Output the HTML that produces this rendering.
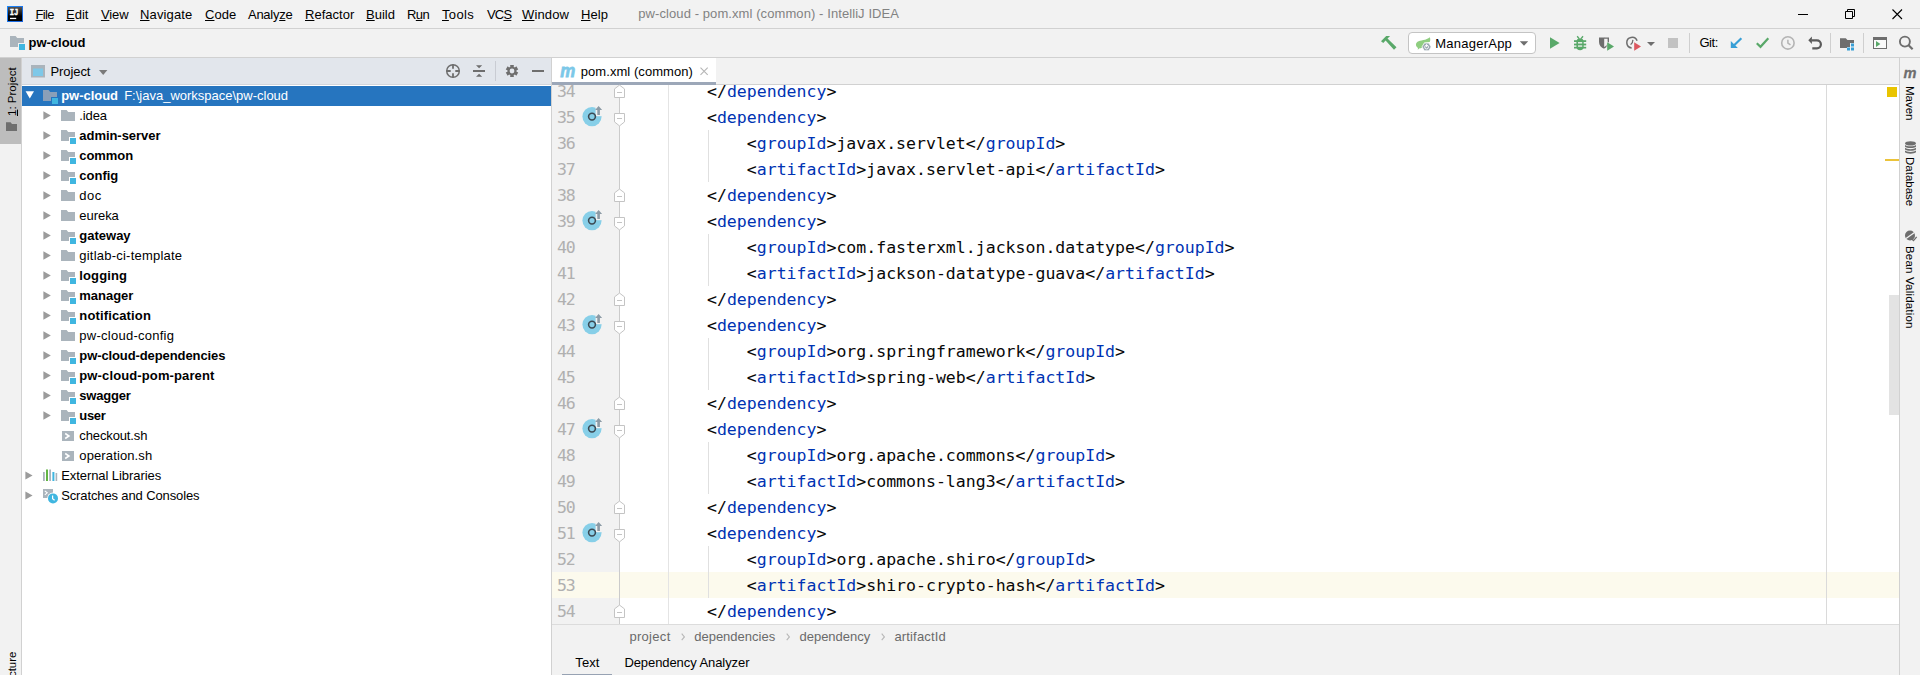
<!DOCTYPE html><html><head><meta charset="utf-8"><title>pw-cloud - pom.xml (common) - IntelliJ IDEA</title><style>

html,body{margin:0;padding:0;}
body{width:1920px;height:675px;overflow:hidden;background:#f2f2f2;position:relative;font-family:"Liberation Sans", sans-serif;font-size:13px;color:#000;}
.a{position:absolute;}
.x{position:absolute;white-space:nowrap;line-height:20px;height:20px;}
.x u{text-decoration:underline;text-decoration-thickness:1px;text-underline-offset:1px;}
svg{position:absolute;overflow:visible;}
.code{position:absolute;white-space:pre;font-family:"DejaVu Sans Mono", "Liberation Mono", monospace;font-size:16.54px;line-height:26px;height:26px;color:#080808;}
.code .t{color:#0033b3;}
.ln{position:absolute;font-family:"DejaVu Sans Mono", "Liberation Mono", monospace;font-size:16.54px;line-height:26px;height:26px;color:#b0b0b0;left:557px;letter-spacing:-1.1px;}

</style></head><body>
<div class="a" style="left:0;top:28px;width:1920px;height:1px;background:#d1d1d1"></div>
<div class="a" style="left:0;top:57px;width:1920px;height:1px;background:#d1d1d1"></div>
<div class="a" style="left:0;top:58px;width:21px;height:86px;background:#bdbdbd"></div>
<div class="a" style="left:21px;top:58px;width:1px;height:617px;background:#d1d1d1"></div>
<div class="a" style="left:22px;top:58px;width:529px;height:26px;background:#e2e6ec"></div>
<div class="a" style="left:22px;top:84px;width:529px;height:1px;background:#d3d6db"></div>
<div class="a" style="left:22px;top:85px;width:529px;height:590px;background:#fff"></div>
<div class="a" style="left:22px;top:86px;width:529px;height:20px;background:#2675bf"></div>
<div class="a" style="left:551px;top:58px;width:1px;height:617px;background:#d1d1d1"></div>
<div class="a" style="left:552px;top:85px;width:1347px;height:539px;background:#fff"></div>
<div class="a" style="left:552px;top:84px;width:1347px;height:1px;background:#d1d1d1"></div>
<div class="a" style="left:552px;top:58px;width:164px;height:24px;background:#fff"></div>
<div class="a" style="left:552px;top:82px;width:164px;height:3px;background:#9ca7b8"></div>
<div class="a" style="left:552px;top:85px;width:67px;height:539px;background:#f2f2f2"></div>
<div class="a" style="left:552px;top:572px;width:1347px;height:26px;background:#fcfaed"></div>
<div class="a" style="left:619px;top:85px;width:1px;height:539px;background:#cbcbcb"></div>
<div class="a" style="left:668px;top:85px;width:1px;height:539px;background:#e4e4e4"></div>
<div class="a" style="left:708px;top:130px;width:1px;height:52px;background:#e0e0e0"></div>
<div class="a" style="left:708px;top:234px;width:1px;height:52px;background:#e0e0e0"></div>
<div class="a" style="left:708px;top:338px;width:1px;height:52px;background:#e0e0e0"></div>
<div class="a" style="left:708px;top:442px;width:1px;height:52px;background:#e0e0e0"></div>
<div class="a" style="left:708px;top:546px;width:1px;height:52px;background:#e0e0e0"></div>
<div class="a" style="left:1826px;top:85px;width:1px;height:539px;background:#dadada"></div>
<div class="a" style="left:1889px;top:295px;width:10px;height:120px;background:#e3e3e3"></div>
<div class="a" style="left:1887px;top:87px;width:10px;height:10px;background:#e9c400"></div>
<div class="a" style="left:1885px;top:159px;width:14px;height:2px;background:#ebc33a"></div>
<div class="a" style="left:1900px;top:58px;width:20px;height:617px;background:#f2f2f2"></div>
<div class="a" style="left:1899px;top:58px;width:1px;height:617px;background:#d1d1d1"></div>
<div class="a" style="left:552px;top:624px;width:1347px;height:51px;background:#f2f2f2"></div>
<div class="a" style="left:552px;top:624px;width:1347px;height:1px;background:#dcdcdc"></div>
<div class="a" style="left:562px;top:674px;width:50px;height:1px;background:#97a2b3"></div>
<svg width="1920" height="675" viewBox="0 0 1920 675" style="left:0;top:0">
<defs><linearGradient id="ijg" x1="0" y1="0" x2="1" y2="1"><stop offset="0" stop-color="#1d8bff"/><stop offset="1" stop-color="#1a5fd8"/></linearGradient><linearGradient id="ijb" x1="0" y1="0" x2="0" y2="1"><stop offset="0" stop-color="#555"/><stop offset=".65" stop-color="#000"/></linearGradient></defs>
<rect x="7" y="6" width="16" height="16" fill="url(#ijg)"/><rect x="8" y="7" width="14" height="14" fill="url(#ijb)"/>
<text x="9.700" y="15.100" font-family="'Liberation Mono',monospace" font-weight="bold" font-size="9.600" fill="#fff" stroke="#fff" stroke-width="0.45" textLength="8.600" lengthAdjust="spacingAndGlyphs">IJ</text>
<rect x="10" y="17.800" width="6.200" height="1.300" fill="#fff"/>
<rect x="1798" y="14" width="10" height="1" fill="#000"/>
<path d="M1845.5 11.5h7v7h-7z M1847.5 11.5v-2h7v7h-2" fill="none" stroke="#000" stroke-width="1"/>
<path d="M1892.5 9.5l9.5 9.5M1902 9.5l-9.5 9.5" fill="none" stroke="#000" stroke-width="1.1"/>
<path d="M10 36h5.6l1.6 2h6.8v9h-14z" fill="#aab4bc"/><rect x="18" y="43" width="7" height="7" fill="#f2f2f2"/><rect x="19" y="44" width="6" height="6" fill="#40b6e0"/>
<path d="M1381 41.2l5.2-5.2h3.9l-2.6 2.6 9 8.6-2.5 2.5-8.4-9.200-2.300 2.600z" fill="#59a869"/>
<rect x="1408.5" y="32.5" width="127" height="21" rx="3.5" fill="#fff" stroke="#c4c4c4"/>
<path d="M1429.800 37.200c.7 1.800.6 3.300-.1 4.700l-5.600.8c.4 2.600-1 5.300-4.500 5.600l-1.900 1.500.300-1.800c-2.500-1.500-2.700-4.500-.5-6.200 2.600-1.900 8.900-1.300 12.300-4.600z" fill="#8fce80"/>
<path d="M1422 46.900l2.300-3.900h4.600l2.300 3.900-2.300 3.900h-4.600z" fill="#9aa7b0" stroke="#fff" stroke-width=".8"/>
<circle cx="1426.600" cy="47.100" r="1.900" fill="none" stroke="#fff" stroke-width=".9"/><rect x="1426.100" y="44.200" width="1" height="2.800" fill="#fff"/>
<path d="M1519.800 41.200h8.400l-4.200 4.500z" fill="#6e6e6e"/>
<path d="M1550 37.200v11.600l9.600-5.800z" fill="#59a869"/>
<g fill="#59a869"><path d="M1576.400 42a3.650 3.800 0 0 1 7.300 0v4.500a3.650 3.800 0 0 1-7.300 0z"/><rect x="1574" y="40.200" width="12.200" height="1.800"/><rect x="1574" y="43.600" width="12.200" height="1.800"/><rect x="1574" y="46.800" width="12.200" height="1.700"/></g>
<path d="M1577.200 36.300l1.900 2.300M1583 36.300l-1.900 2.300" stroke="#59a869" stroke-width="1.400" fill="none"/>
<rect x="1578" y="42.100" width="4.200" height="1.400" fill="#f2f2f2"/><rect x="1578" y="45.400" width="4.200" height="1.300" fill="#f2f2f2"/>
<path d="M1599 37.400h5.200v11.400c-3-1.200-5.200-3.700-5.200-6.900z" fill="#6e6e6e"/>
<path d="M1604 38.100h4.300v3.800c0 2.700-1.800 4.800-4.300 6" fill="none" stroke="#6e6e6e" stroke-width="1.400"/>
<path d="M1607.200 42.300v8.500l6.800-4.250z" fill="#59a869" stroke="#f2f2f2" stroke-width="1.200" paint-order="stroke"/>
<path d="M1637.080 40.790A5.300 5.300 0 1 0 1631.640 47.880" fill="none" stroke="#6e6e6e" stroke-width="1.500"/>
<path d="M1632.900 39.800l-.6 3-1.700 1.800" fill="none" stroke="#6e6e6e" stroke-width="1.300"/>
<path d="M1634.200 42.300v8.500l6.800-4.250z" fill="#db5860" stroke="#f2f2f2" stroke-width="1.200" paint-order="stroke"/>
<path d="M1647 42h8l-4 3.900z" fill="#6e6e6e"/>
<rect x="1668" y="38" width="10" height="10" fill="#c2c2c2"/>
<rect x="1689" y="33" width="1" height="20" fill="#cfcfcf"/>
<rect x="1830" y="33" width="1" height="20" fill="#cfcfcf"/>
<rect x="1863" y="33" width="1" height="20" fill="#cfcfcf"/>
<path d="M1730.800 41v7.100h7.100l-2.500-2.500 6.700-6.700-1.500-1.500-6.700 6.700z" fill="#389fd6"/>
<path d="M1756.800 43.200l3.700 3.600 7.800-8.600" fill="none" stroke="#59a869" stroke-width="2.200"/>
<circle cx="1787.900" cy="42.900" r="6.200" fill="none" stroke="#b4b4b4" stroke-width="1.600"/><path d="M1787.900 39.800v3.300l2.600 1.800" fill="none" stroke="#b4b4b4" stroke-width="1.500"/>
<path d="M1808.300 40.300l3.600-3.700v7.400z" fill="#5a5a5a"/><path d="M1811.500 40.300h5.400a4 4 0 0 1 0 8h-4.600" fill="none" stroke="#5a5a5a" stroke-width="2.200"/>
<path d="M1840 38.200h5.800l1.600 1.800h6.600v3h-4v4h-3v1h-7z" fill="#6e6e6e"/>
<rect x="1851" y="43.5" width="3" height="3" fill="#389fd6"/>
<rect x="1847" y="47.5" width="3" height="3" fill="#389fd6"/>
<rect x="1851" y="47.5" width="3" height="3" fill="#389fd6"/>
<rect x="1873.500" y="37.500" width="13" height="11" fill="#fafafa" stroke="#6e6e6e"/><rect x="1873" y="37" width="14" height="3" fill="#6e6e6e"/>
<path d="M1876 41v6l4.400-3z" fill="#59a869"/>
<circle cx="1904.900" cy="41.600" r="5" fill="none" stroke="#6e6e6e" stroke-width="1.900"/><path d="M1908.600 45.300l4 4" stroke="#6e6e6e" stroke-width="2.200" fill="none"/>
<path d="M6 122.300h4.600l1.400 1.700h5v7h-11z" fill="#6e6e6e"/>
<rect x="31" y="65" width="14" height="12.500" fill="#aab4bc"/><rect x="33" y="68.500" width="10" height="7.500" fill="#7ec8e8"/>
<path d="M99 70h8.400l-4.200 5z" fill="#7a7a7a"/>
<g fill="none" stroke="#6e6e6e"><circle cx="453" cy="71" r="6.300" stroke-width="1.500"/><path d="M453 64.500v4.200M453 73.300v4.200M446.500 71h4.200M455.300 71h4.200" stroke-width="1.800"/></g>
<rect x="473" y="70" width="12" height="2" fill="#6e6e6e"/><path d="M476 65.200h6.200l-3.100 3z M476 76.800h6.200l-3.100-3z" fill="#6e6e6e"/>
<rect x="495" y="61" width="1" height="20" fill="#c9ccd3"/>
<path d="M510.13 64.88L513.87 64.88L513.65 66.71L514.89 67.43L516.36 66.32L518.24 69.56L516.54 70.28L516.54 71.72L518.24 72.44L516.36 75.68L514.89 74.57L513.65 75.29L513.87 77.12L510.13 77.12L510.35 75.29L509.11 74.57L507.64 75.68L505.76 72.44L507.46 71.72L507.46 70.28L505.76 69.56L507.64 66.32L509.11 67.43L510.35 66.71z M514.400 71a2.400 2.400 0 1 0-4.800 0a2.400 2.400 0 1 0 4.800 0z" fill="#6e6e6e" fill-rule="evenodd"/>
<rect x="532" y="70" width="12" height="2" fill="#6e6e6e"/>
<path d="M25.600 91.200h8.400l-4.200 7.400z" fill="#fff"/>
<path d="M43 90h5.6l1.6 2h6.8v9h-14z" fill="#8a9fb8"/><rect x="51" y="97" width="7" height="7" fill="#2675bf"/><rect x="52" y="98" width="6" height="6" fill="#40b6e0"/>
<path d="M43.400 111.3v8.400l7.400-4.200z" fill="#9b9b9b"/>
<path d="M61 110h5.6l1.6 2h6.8v9h-14z" fill="#aab4bc"/>
<path d="M43.400 131.3v8.400l7.400-4.200z" fill="#9b9b9b"/>
<path d="M61 130h5.6l1.6 2h6.8v9h-14z" fill="#aab4bc"/><rect x="69" y="137" width="7" height="7" fill="#fff"/><rect x="70" y="138" width="6" height="6" fill="#40b6e0"/>
<path d="M43.400 151.3v8.400l7.400-4.200z" fill="#9b9b9b"/>
<path d="M61 150h5.6l1.6 2h6.8v9h-14z" fill="#aab4bc"/><rect x="69" y="157" width="7" height="7" fill="#fff"/><rect x="70" y="158" width="6" height="6" fill="#40b6e0"/>
<path d="M43.400 171.3v8.400l7.400-4.200z" fill="#9b9b9b"/>
<path d="M61 170h5.6l1.6 2h6.8v9h-14z" fill="#aab4bc"/><rect x="69" y="177" width="7" height="7" fill="#fff"/><rect x="70" y="178" width="6" height="6" fill="#40b6e0"/>
<path d="M43.400 191.3v8.400l7.400-4.200z" fill="#9b9b9b"/>
<path d="M61 190h5.6l1.6 2h6.8v9h-14z" fill="#aab4bc"/>
<path d="M43.400 211.3v8.400l7.400-4.200z" fill="#9b9b9b"/>
<path d="M61 210h5.6l1.6 2h6.8v9h-14z" fill="#aab4bc"/>
<path d="M43.400 231.3v8.400l7.400-4.200z" fill="#9b9b9b"/>
<path d="M61 230h5.6l1.6 2h6.8v9h-14z" fill="#aab4bc"/><rect x="69" y="237" width="7" height="7" fill="#fff"/><rect x="70" y="238" width="6" height="6" fill="#40b6e0"/>
<path d="M43.400 251.3v8.400l7.400-4.200z" fill="#9b9b9b"/>
<path d="M61 250h5.6l1.6 2h6.8v9h-14z" fill="#aab4bc"/>
<path d="M43.400 271.3v8.400l7.400-4.200z" fill="#9b9b9b"/>
<path d="M61 270h5.6l1.6 2h6.8v9h-14z" fill="#aab4bc"/><rect x="69" y="277" width="7" height="7" fill="#fff"/><rect x="70" y="278" width="6" height="6" fill="#40b6e0"/>
<path d="M43.400 291.3v8.400l7.400-4.200z" fill="#9b9b9b"/>
<path d="M61 290h5.6l1.6 2h6.8v9h-14z" fill="#aab4bc"/><rect x="69" y="297" width="7" height="7" fill="#fff"/><rect x="70" y="298" width="6" height="6" fill="#40b6e0"/>
<path d="M43.400 311.3v8.400l7.400-4.200z" fill="#9b9b9b"/>
<path d="M61 310h5.6l1.6 2h6.8v9h-14z" fill="#aab4bc"/><rect x="69" y="317" width="7" height="7" fill="#fff"/><rect x="70" y="318" width="6" height="6" fill="#40b6e0"/>
<path d="M43.400 331.3v8.400l7.400-4.200z" fill="#9b9b9b"/>
<path d="M61 330h5.6l1.6 2h6.8v9h-14z" fill="#aab4bc"/>
<path d="M43.400 351.3v8.400l7.400-4.200z" fill="#9b9b9b"/>
<path d="M61 350h5.6l1.6 2h6.8v9h-14z" fill="#aab4bc"/><rect x="69" y="357" width="7" height="7" fill="#fff"/><rect x="70" y="358" width="6" height="6" fill="#40b6e0"/>
<path d="M43.400 371.3v8.400l7.400-4.200z" fill="#9b9b9b"/>
<path d="M61 370h5.6l1.6 2h6.8v9h-14z" fill="#aab4bc"/><rect x="69" y="377" width="7" height="7" fill="#fff"/><rect x="70" y="378" width="6" height="6" fill="#40b6e0"/>
<path d="M43.400 391.3v8.400l7.400-4.200z" fill="#9b9b9b"/>
<path d="M61 390h5.6l1.6 2h6.8v9h-14z" fill="#aab4bc"/><rect x="69" y="397" width="7" height="7" fill="#fff"/><rect x="70" y="398" width="6" height="6" fill="#40b6e0"/>
<path d="M43.400 411.3v8.400l7.400-4.200z" fill="#9b9b9b"/>
<path d="M61 410h5.6l1.6 2h6.8v9h-14z" fill="#aab4bc"/><rect x="69" y="417" width="7" height="7" fill="#fff"/><rect x="70" y="418" width="6" height="6" fill="#40b6e0"/>
<rect x="62" y="431" width="12" height="10" fill="#aab4bc"/>
<path d="M65.200 433.5l3.800 2.500-3.800 2.500" fill="none" stroke="#fff" stroke-width="1.500"/>
<rect x="62" y="451" width="12" height="10" fill="#aab4bc"/>
<path d="M65.200 453.5l3.800 2.500-3.800 2.500" fill="none" stroke="#fff" stroke-width="1.500"/>
<path d="M25.400 471.5v8l7.200-4z" fill="#9b9b9b"/>
<rect x="43" y="472" width="1.800" height="9" fill="#aab4bc"/>
<rect x="46" y="469.5" width="2" height="11.500" fill="#62b543"/>
<rect x="49.200" y="469.5" width="1.800" height="11.500" fill="#aab4bc"/>
<rect x="52.400" y="472" width="2" height="9" fill="#40b6e0"/>
<rect x="55.600" y="473" width="1.600" height="8" fill="#aab4bc"/>
<path d="M25.400 491.5v8l7.200-4z" fill="#9b9b9b"/>
<rect x="43" y="489" width="10" height="9" fill="#aab4bc"/>
<path d="M44.800 490.8l2.400 2-2.400 2" fill="none" stroke="#fff" stroke-width="1.100"/>
<circle cx="53" cy="498.4" r="5.800" fill="#fff"/><circle cx="53" cy="498.4" r="5" fill="#40b6e0"/>
<path d="M52.600 495.4v3.200l2 1.600" fill="none" stroke="#fff" stroke-width="1.200"/>
<text x="560.2" y="76.800" font-family="'Liberation Sans',sans-serif" font-weight="bold" font-style="italic" font-size="19" fill="#7cc8e8" stroke="#7cc8e8" stroke-width="0.8" textLength="15" lengthAdjust="spacingAndGlyphs">m</text>
<path d="M700.500 67.700l7.200 7.200M707.700 67.700l-7.200 7.200" stroke="#b5b5b5" stroke-width="1.100" fill="none"/>
<path d="M614.500 97.5v-8.600l5-3.800 5 3.800v8.600z" fill="#fff" stroke="#c4c4c4"/>
<rect x="617" y="92" width="5" height="1" fill="#c4c4c4"/>
<path d="M614.500 113.5v8.400l5 4 5-4v-8.400z" fill="#fff" stroke="#c4c4c4"/>
<rect x="617" y="118" width="5" height="1" fill="#c4c4c4"/>
<circle cx="592" cy="116.6" r="9.600" fill="#87cfe8"/>
<path d="M595.600 116.2h7.600v-11h-7.600z" fill="#f2f2f2"/>
<circle cx="592" cy="116.6" r="3.400" fill="none" stroke="#3b4a54" stroke-width="1.600"/>
<path d="M598.600 106l3.500 4h-2.200v5h-2.600v-5h-2.200z" fill="#8c9ba6"/>
<path d="M614.500 201.5v-8.600l5-3.800 5 3.800v8.600z" fill="#fff" stroke="#c4c4c4"/>
<rect x="617" y="196" width="5" height="1" fill="#c4c4c4"/>
<path d="M614.500 217.5v8.400l5 4 5-4v-8.400z" fill="#fff" stroke="#c4c4c4"/>
<rect x="617" y="222" width="5" height="1" fill="#c4c4c4"/>
<circle cx="592" cy="220.6" r="9.600" fill="#87cfe8"/>
<path d="M595.600 220.2h7.600v-11h-7.600z" fill="#f2f2f2"/>
<circle cx="592" cy="220.6" r="3.400" fill="none" stroke="#3b4a54" stroke-width="1.600"/>
<path d="M598.600 210l3.500 4h-2.200v5h-2.600v-5h-2.200z" fill="#8c9ba6"/>
<path d="M614.500 305.5v-8.600l5-3.800 5 3.800v8.600z" fill="#fff" stroke="#c4c4c4"/>
<rect x="617" y="300" width="5" height="1" fill="#c4c4c4"/>
<path d="M614.500 321.5v8.400l5 4 5-4v-8.400z" fill="#fff" stroke="#c4c4c4"/>
<rect x="617" y="326" width="5" height="1" fill="#c4c4c4"/>
<circle cx="592" cy="324.6" r="9.600" fill="#87cfe8"/>
<path d="M595.600 324.2h7.600v-11h-7.600z" fill="#f2f2f2"/>
<circle cx="592" cy="324.6" r="3.400" fill="none" stroke="#3b4a54" stroke-width="1.600"/>
<path d="M598.600 314l3.500 4h-2.200v5h-2.600v-5h-2.200z" fill="#8c9ba6"/>
<path d="M614.500 409.5v-8.600l5-3.800 5 3.800v8.600z" fill="#fff" stroke="#c4c4c4"/>
<rect x="617" y="404" width="5" height="1" fill="#c4c4c4"/>
<path d="M614.500 425.5v8.400l5 4 5-4v-8.400z" fill="#fff" stroke="#c4c4c4"/>
<rect x="617" y="430" width="5" height="1" fill="#c4c4c4"/>
<circle cx="592" cy="428.6" r="9.600" fill="#87cfe8"/>
<path d="M595.600 428.2h7.600v-11h-7.600z" fill="#f2f2f2"/>
<circle cx="592" cy="428.6" r="3.400" fill="none" stroke="#3b4a54" stroke-width="1.600"/>
<path d="M598.600 418l3.500 4h-2.200v5h-2.600v-5h-2.200z" fill="#8c9ba6"/>
<path d="M614.500 513.5v-8.600l5-3.800 5 3.800v8.600z" fill="#fff" stroke="#c4c4c4"/>
<rect x="617" y="508" width="5" height="1" fill="#c4c4c4"/>
<path d="M614.500 529.5v8.400l5 4 5-4v-8.400z" fill="#fff" stroke="#c4c4c4"/>
<rect x="617" y="534" width="5" height="1" fill="#c4c4c4"/>
<circle cx="592" cy="532.6" r="9.600" fill="#87cfe8"/>
<path d="M595.600 532.2h7.600v-11h-7.600z" fill="#f2f2f2"/>
<circle cx="592" cy="532.6" r="3.400" fill="none" stroke="#3b4a54" stroke-width="1.600"/>
<path d="M598.600 522l3.500 4h-2.200v5h-2.600v-5h-2.200z" fill="#8c9ba6"/>
<path d="M614.500 617.5v-8.600l5-3.800 5 3.800v8.600z" fill="#fff" stroke="#c4c4c4"/>
<rect x="617" y="612" width="5" height="1" fill="#c4c4c4"/>
<path d="M681.7 633.600l2.700 3.300-2.700 3.300" fill="none" stroke="#b6b6b6" stroke-width="1.100"/>
<path d="M786.7 633.600l2.700 3.300-2.700 3.300" fill="none" stroke="#b6b6b6" stroke-width="1.100"/>
<path d="M881.7 633.600l2.700 3.300-2.700 3.300" fill="none" stroke="#b6b6b6" stroke-width="1.100"/>
<text x="1903.600" y="78.300" font-family="'Liberation Sans',sans-serif" font-weight="bold" font-style="italic" font-size="15.500" fill="#6e6e6e" stroke="#6e6e6e" stroke-width="0.3" textLength="13" lengthAdjust="spacingAndGlyphs">m</text>
<g fill="#6e6e6e"><ellipse cx="1910.500" cy="143.400" rx="5.500" ry="2.200"/>
<path d="M1905 145c1.500 1.800 9.500 1.800 11 0v1.700c-1.500 1.800-9.500 1.800-11 0z"/>
<path d="M1905 147.8c1.500 1.800 9.500 1.800 11 0v1.700c-1.500 1.800-9.500 1.800-11 0z"/>
<path d="M1905 150.6c1.500 1.800 9.500 1.800 11 0v1.700c-1.500 1.800-9.500 1.800-11 0z"/>
</g>
<circle cx="1910" cy="235.500" r="5" fill="#6e6e6e"/><path d="M1906 238.500l8.500-6" stroke="#f2f2f2" stroke-width="1.300"/><path d="M1911.500 238.800l2 1.800 3.200-3.800" fill="none" stroke="#6e6e6e" stroke-width="1.300"/>
</svg>
<span class="x r" style="font-size:11.5px;left:2.2px;top:116px;transform:rotate(-90deg);transform-origin:0 0;"><u style="text-underline-offset:1px">1</u>: Project</span>
<span class="x r" style="font-size:11.5px;left:2.4px;top:710.5px;transform:rotate(-90deg);transform-origin:0 0;">7: Structure</span>
<span class="x r" style="font-size:11.5px;left:1919.5px;top:86px;transform:rotate(90deg);transform-origin:0 0;">Maven</span>
<span class="x r" style="font-size:11.5px;left:1919.5px;top:157px;transform:rotate(90deg);transform-origin:0 0;">Database</span>
<span class="x r" style="font-size:11.5px;left:1919.5px;top:246px;letter-spacing:0.2px;transform:rotate(90deg);transform-origin:0 0;">Bean Validation</span>
<div class="ln" style="top:79px">34</div>
<div class="code" style="left:706.98px;top:79px"><span class="p">&lt;/</span><span class="t">dependency</span><span class="p">&gt;</span></div>
<div class="ln" style="top:105px">35</div>
<div class="code" style="left:706.98px;top:105px"><span class="p">&lt;</span><span class="t">dependency</span><span class="p">&gt;</span></div>
<div class="ln" style="top:131px">36</div>
<div class="code" style="left:746.82px;top:131px"><span class="p">&lt;</span><span class="t">groupId</span><span class="p">&gt;</span><span class="p">javax.servlet</span><span class="p">&lt;/</span><span class="t">groupId</span><span class="p">&gt;</span></div>
<div class="ln" style="top:157px">37</div>
<div class="code" style="left:746.82px;top:157px"><span class="p">&lt;</span><span class="t">artifactId</span><span class="p">&gt;</span><span class="p">javax.servlet-api</span><span class="p">&lt;/</span><span class="t">artifactId</span><span class="p">&gt;</span></div>
<div class="ln" style="top:183px">38</div>
<div class="code" style="left:706.98px;top:183px"><span class="p">&lt;/</span><span class="t">dependency</span><span class="p">&gt;</span></div>
<div class="ln" style="top:209px">39</div>
<div class="code" style="left:706.98px;top:209px"><span class="p">&lt;</span><span class="t">dependency</span><span class="p">&gt;</span></div>
<div class="ln" style="top:235px">40</div>
<div class="code" style="left:746.82px;top:235px"><span class="p">&lt;</span><span class="t">groupId</span><span class="p">&gt;</span><span class="p">com.fasterxml.jackson.datatype</span><span class="p">&lt;/</span><span class="t">groupId</span><span class="p">&gt;</span></div>
<div class="ln" style="top:261px">41</div>
<div class="code" style="left:746.82px;top:261px"><span class="p">&lt;</span><span class="t">artifactId</span><span class="p">&gt;</span><span class="p">jackson-datatype-guava</span><span class="p">&lt;/</span><span class="t">artifactId</span><span class="p">&gt;</span></div>
<div class="ln" style="top:287px">42</div>
<div class="code" style="left:706.98px;top:287px"><span class="p">&lt;/</span><span class="t">dependency</span><span class="p">&gt;</span></div>
<div class="ln" style="top:313px">43</div>
<div class="code" style="left:706.98px;top:313px"><span class="p">&lt;</span><span class="t">dependency</span><span class="p">&gt;</span></div>
<div class="ln" style="top:339px">44</div>
<div class="code" style="left:746.82px;top:339px"><span class="p">&lt;</span><span class="t">groupId</span><span class="p">&gt;</span><span class="p">org.springframework</span><span class="p">&lt;/</span><span class="t">groupId</span><span class="p">&gt;</span></div>
<div class="ln" style="top:365px">45</div>
<div class="code" style="left:746.82px;top:365px"><span class="p">&lt;</span><span class="t">artifactId</span><span class="p">&gt;</span><span class="p">spring-web</span><span class="p">&lt;/</span><span class="t">artifactId</span><span class="p">&gt;</span></div>
<div class="ln" style="top:391px">46</div>
<div class="code" style="left:706.98px;top:391px"><span class="p">&lt;/</span><span class="t">dependency</span><span class="p">&gt;</span></div>
<div class="ln" style="top:417px">47</div>
<div class="code" style="left:706.98px;top:417px"><span class="p">&lt;</span><span class="t">dependency</span><span class="p">&gt;</span></div>
<div class="ln" style="top:443px">48</div>
<div class="code" style="left:746.82px;top:443px"><span class="p">&lt;</span><span class="t">groupId</span><span class="p">&gt;</span><span class="p">org.apache.commons</span><span class="p">&lt;/</span><span class="t">groupId</span><span class="p">&gt;</span></div>
<div class="ln" style="top:469px">49</div>
<div class="code" style="left:746.82px;top:469px"><span class="p">&lt;</span><span class="t">artifactId</span><span class="p">&gt;</span><span class="p">commons-lang3</span><span class="p">&lt;/</span><span class="t">artifactId</span><span class="p">&gt;</span></div>
<div class="ln" style="top:495px">50</div>
<div class="code" style="left:706.98px;top:495px"><span class="p">&lt;/</span><span class="t">dependency</span><span class="p">&gt;</span></div>
<div class="ln" style="top:521px">51</div>
<div class="code" style="left:706.98px;top:521px"><span class="p">&lt;</span><span class="t">dependency</span><span class="p">&gt;</span></div>
<div class="ln" style="top:547px">52</div>
<div class="code" style="left:746.82px;top:547px"><span class="p">&lt;</span><span class="t">groupId</span><span class="p">&gt;</span><span class="p">org.apache.shiro</span><span class="p">&lt;/</span><span class="t">groupId</span><span class="p">&gt;</span></div>
<div class="ln" style="top:573px">53</div>
<div class="code" style="left:746.82px;top:573px"><span class="p">&lt;</span><span class="t">artifactId</span><span class="p">&gt;</span><span class="p">shiro-crypto-hash</span><span class="p">&lt;/</span><span class="t">artifactId</span><span class="p">&gt;</span></div>
<div class="ln" style="top:599px">54</div>
<div class="code" style="left:706.98px;top:599px"><span class="p">&lt;/</span><span class="t">dependency</span><span class="p">&gt;</span></div>
<span class="x" style="left:35.5px;top:4.5px;letter-spacing:-0.642px;"><u>F</u>ile</span>
<span class="x" style="left:66.0px;top:4.5px;letter-spacing:-0.002px;"><u>E</u>dit</span>
<span class="x" style="left:101.0px;top:4.5px;letter-spacing:-0.138px;"><u>V</u>iew</span>
<span class="x" style="left:140.0px;top:4.5px;letter-spacing:0.136px;"><u>N</u>avigate</span>
<span class="x" style="left:205.0px;top:4.5px;letter-spacing:0.077px;"><u>C</u>ode</span>
<span class="x" style="left:248.0px;top:4.5px;letter-spacing:-0.267px;">Analy<u>z</u>e</span>
<span class="x" style="left:305.0px;top:4.5px;letter-spacing:0.032px;"><u>R</u>efactor</span>
<span class="x" style="left:366.0px;top:4.5px;letter-spacing:-0.004px;"><u>B</u>uild</span>
<span class="x" style="left:407.0px;top:4.5px;letter-spacing:-0.586px;">R<u>u</u>n</span>
<span class="x" style="left:442.0px;top:4.5px;letter-spacing:0.348px;"><u>T</u>ools</span>
<span class="x" style="left:487.0px;top:4.5px;letter-spacing:-0.800px;">VC<u>S</u></span>
<span class="x" style="left:522.0px;top:4.5px;letter-spacing:0.142px;"><u>W</u>indow</span>
<span class="x" style="left:581.0px;top:4.5px;letter-spacing:0.037px;"><u>H</u>elp</span>
<span class="x" style="left:638.3px;top:4.0px;color:#828282;letter-spacing:0.084px;">pw-cloud - pom.xml (common) - IntelliJ IDEA</span>
<span class="x" style="left:28.5px;top:32.5px;font-weight:bold;letter-spacing:-0.018px;">pw-cloud</span>
<span class="x" style="left:1435.3px;top:33.9px;letter-spacing:0.235px;">ManagerApp</span>
<span class="x" style="left:1699.4px;top:33.0px;letter-spacing:-0.434px;">Git:</span>
<span class="x" style="left:50.5px;top:61.5px;letter-spacing:-0.081px;">Project</span>
<span class="x" style="left:61.2px;top:86.0px;font-weight:bold;color:#fff;letter-spacing:-0.031px;">pw-cloud</span>
<span class="x" style="left:79.3px;top:106.0px;letter-spacing:-0.121px;">.idea</span>
<span class="x" style="left:79.3px;top:126.0px;font-weight:bold;letter-spacing:-0.046px;">admin-server</span>
<span class="x" style="left:79.3px;top:146.0px;font-weight:bold;letter-spacing:-0.062px;">common</span>
<span class="x" style="left:79.3px;top:166.0px;font-weight:bold;letter-spacing:0.000px;">config</span>
<span class="x" style="left:79.3px;top:186.0px;letter-spacing:0.477px;">doc</span>
<span class="x" style="left:79.3px;top:206.0px;letter-spacing:-0.042px;">eureka</span>
<span class="x" style="left:79.3px;top:226.0px;font-weight:bold;letter-spacing:-0.002px;">gateway</span>
<span class="x" style="left:79.3px;top:246.0px;letter-spacing:0.222px;">gitlab-ci-template</span>
<span class="x" style="left:79.3px;top:266.0px;font-weight:bold;letter-spacing:0.123px;">logging</span>
<span class="x" style="left:79.3px;top:286.0px;font-weight:bold;letter-spacing:-0.015px;">manager</span>
<span class="x" style="left:79.3px;top:306.0px;font-weight:bold;letter-spacing:0.138px;">notification</span>
<span class="x" style="left:79.3px;top:326.0px;letter-spacing:0.257px;">pw-cloud-config</span>
<span class="x" style="left:79.3px;top:346.0px;font-weight:bold;letter-spacing:-0.099px;">pw-cloud-dependencies</span>
<span class="x" style="left:79.3px;top:366.0px;font-weight:bold;letter-spacing:0.122px;">pw-cloud-pom-parent</span>
<span class="x" style="left:79.3px;top:386.0px;font-weight:bold;letter-spacing:-0.207px;">swagger</span>
<span class="x" style="left:79.3px;top:406.0px;font-weight:bold;letter-spacing:-0.342px;">user</span>
<span class="x" style="left:79.3px;top:426.0px;letter-spacing:-0.125px;">checkout.sh</span>
<span class="x" style="left:79.3px;top:446.0px;letter-spacing:0.120px;">operation.sh</span>
<span class="x" style="left:61.2px;top:466.0px;letter-spacing:-0.070px;">External Libraries</span>
<span class="x" style="left:61.2px;top:486.0px;letter-spacing:-0.124px;">Scratches and Consoles</span>
<span class="x" style="left:124.2px;top:86.0px;color:#fff;letter-spacing:-0.005px;">F:\java_workspace\pw-cloud</span>
<span class="x" style="left:580.8px;top:61.5px;letter-spacing:0.053px;">pom.xml (common)</span>
<span class="x" style="left:629.4px;top:626.5px;color:#6a6a6a;letter-spacing:0.310px;">project</span>
<span class="x" style="left:694.2px;top:626.5px;color:#6a6a6a;letter-spacing:0.003px;">dependencies</span>
<span class="x" style="left:799.4px;top:626.5px;color:#6a6a6a;letter-spacing:0.016px;">dependency</span>
<span class="x" style="left:894.4px;top:626.5px;color:#6a6a6a;letter-spacing:0.164px;">artifactId</span>
<span class="x" style="left:575.3px;top:653.0px;letter-spacing:0.114px;">Text</span>
<span class="x" style="left:624.4px;top:653.0px;letter-spacing:-0.078px;">Dependency Analyzer</span>
</body></html>
